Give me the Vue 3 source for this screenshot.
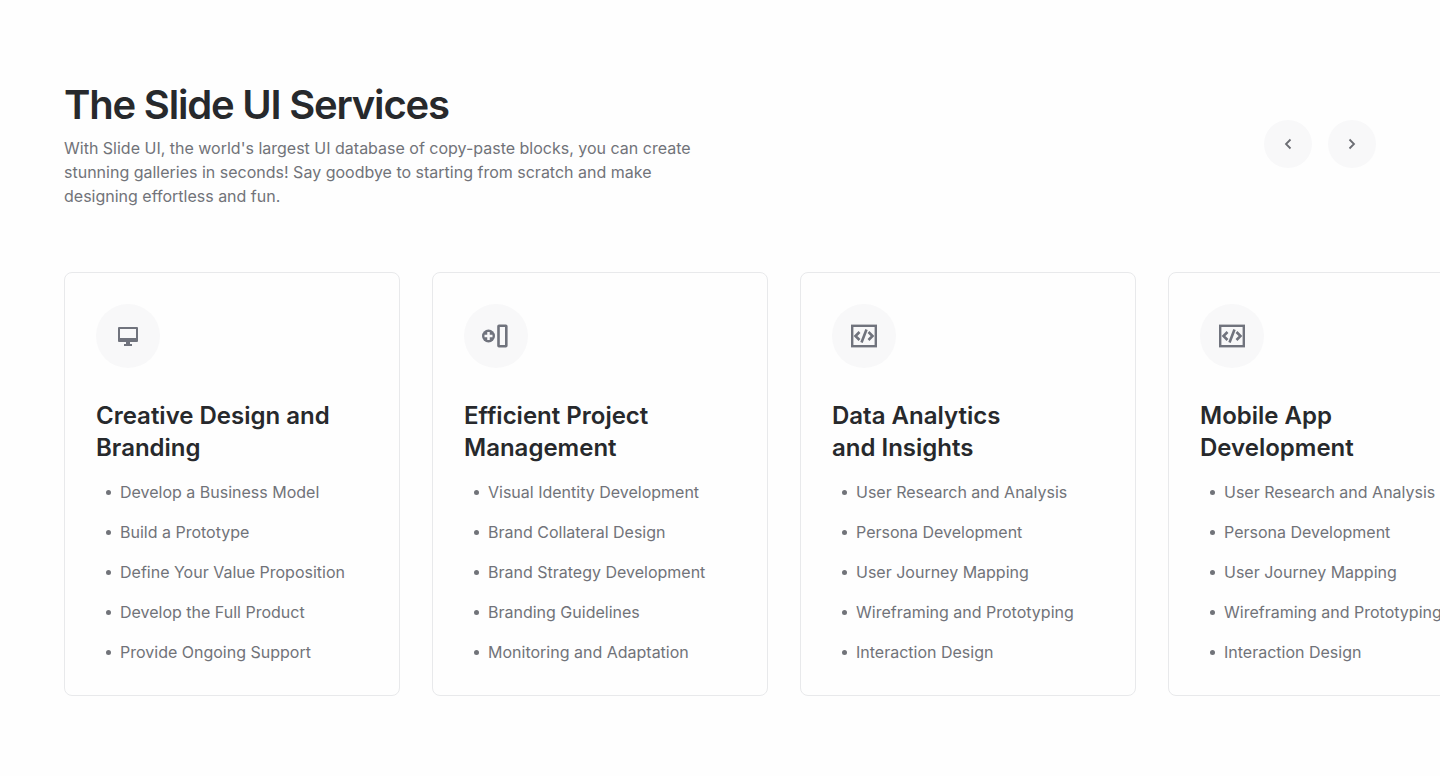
<script setup>
import { ref } from 'vue'

const track = ref(null)
const slide = (direction) => track.value.scrollBy({ left: direction * 368, behavior: 'smooth' })

const services = [
  { title: ['Creative Design and', 'Branding'], icon: 'monitor', items: ['Develop a Business Model', 'Build a Prototype', 'Define Your Value Proposition', 'Develop the Full Product', 'Provide Ongoing Support'] },
  { title: ['Efficient Project', 'Management'], icon: 'column', items: ['Visual Identity Development', 'Brand Collateral Design', 'Brand Strategy Development', 'Branding Guidelines', 'Monitoring and Adaptation'] },
  { title: ['Data Analytics', 'and Insights'], icon: 'code', items: ['User Research and Analysis', 'Persona Development', 'User Journey Mapping', 'Wireframing and Prototyping', 'Interaction Design'] },
  { title: ['Mobile App', 'Development'], icon: 'code', items: ['User Research and Analysis', 'Persona Development', 'User Journey Mapping', 'Wireframing and Prototyping', 'Interaction Design'] },
]
</script>

<template>
  <section class="services">
    <header class="header">
      <div class="intro">
        <h1>The Slide UI Services</h1>
        <p>With Slide UI, the world's largest UI database of copy-paste blocks, you can create stunning galleries in seconds! Say goodbye to starting from scratch and make designing effortless and fun.</p>
      </div>
      <div class="controls">
        <button type="button" aria-label="Previous" @click="slide(-1)">
          <svg width="24" height="24" viewBox="0 0 24 24"><path d="m14.500 7.500-4.500 4.500 4.500 4.500" /></svg>
        </button>
        <button type="button" aria-label="Next" @click="slide(1)">
          <svg width="24" height="24" viewBox="0 0 24 24"><path d="m9.500 7.500 4.500 4.500-4.500 4.500" /></svg>
        </button>
      </div>
    </header>
    <div ref="track" class="track">
      <article v-for="s in services" :key="s.title[0]" class="card">
        <div class="badge">
          <svg v-if="s.icon === 'monitor'" width="32" height="32" viewBox="0 0 32 32" fill="currentColor">
            <path fill-rule="evenodd" d="M7 7h18q1 0 1 1v13q0 1-1 1h-7v2h2v2h-8v-2h2v-2H7q-1 0-1-1V8q0-1 1-1Zm1 2v9h16V9Z" />
          </svg>
          <svg v-else-if="s.icon === 'column'" width="32" height="32" viewBox="0 0 32 32" fill="none">
            <circle cx="8.500" cy="16" r="6.500" fill="currentColor" />
            <path class="plus" d="M8.500 12v8M4.500 16h8" />
            <rect x="18.500" y="5.700" width="7.800" height="20.600" rx="0.500" stroke="currentColor" stroke-width="2.600" />
          </svg>
          <svg v-else width="32" height="32" viewBox="0 0 32 32" fill="none" stroke="currentColor">
            <rect x="4.200" y="5.800" width="23.600" height="20.400" stroke-width="2.400" />
            <path d="m11.500 12-4 4 4 4M20.500 12l4 4-4 4M18.500 9.500l-5 13" stroke-width="2.600" />
          </svg>
        </div>
        <h2>{{ s.title[0] }}<br />{{ s.title[1] }}</h2>
        <ul>
          <li v-for="item in s.items" :key="item">{{ item }}</li>
        </ul>
      </article>
    </div>
  </section>
</template>

<style>
body { margin: 0; background: #fefefe; }
</style>

<style scoped>
.services { font-family: Inter, "Liberation Sans", sans-serif; color: #717379; padding: 80px 0 80px 64px; }
.header { display: flex; align-items: center; justify-content: space-between; gap: 32px; padding-right: 64px; margin-bottom: 64px; }
.intro { max-width: 640px; }
h1 { margin: 0 0 6px; font-size: 40px; line-height: 50px; font-weight: 600; letter-spacing: -0.03em; color: #27292c; }
p { margin: 0; font-size: 16px; line-height: 24px; }
.controls { display: flex; gap: 16px; }
button { display: flex; align-items: center; justify-content: center; width: 48px; height: 48px; padding: 0; border: 0; border-radius: 50%; background: #f8f8f9; color: #6b6d73; cursor: pointer; }
button svg { fill: none; stroke: currentColor; stroke-width: 1.8; }
.track { display: flex; gap: 32px; overflow-x: auto; scrollbar-width: none; }
.card { box-sizing: border-box; flex: 0 0 336px; padding: 31px; border: 1px solid #e8e9eb; border-radius: 8px; }
.badge { display: flex; align-items: center; justify-content: center; width: 64px; height: 64px; border-radius: 50%; background: #f8f8f9; color: #70737d; margin-bottom: 32px; }
.plus { stroke: #f8f8f9; stroke-width: 2.5px; }
h2 { margin: 0 0 16px; font-size: 24px; line-height: 32px; font-weight: 600; color: #27292c; }
ul { display: flex; flex-direction: column; gap: 16px; margin: 0; padding: 0 0 0 10px; list-style: none; }
li { display: flex; align-items: center; gap: 9px; font-size: 16px; line-height: 24px; white-space: nowrap; }
li::before { content: ""; width: 5px; height: 5px; border-radius: 50%; background: currentColor; }
</style>
